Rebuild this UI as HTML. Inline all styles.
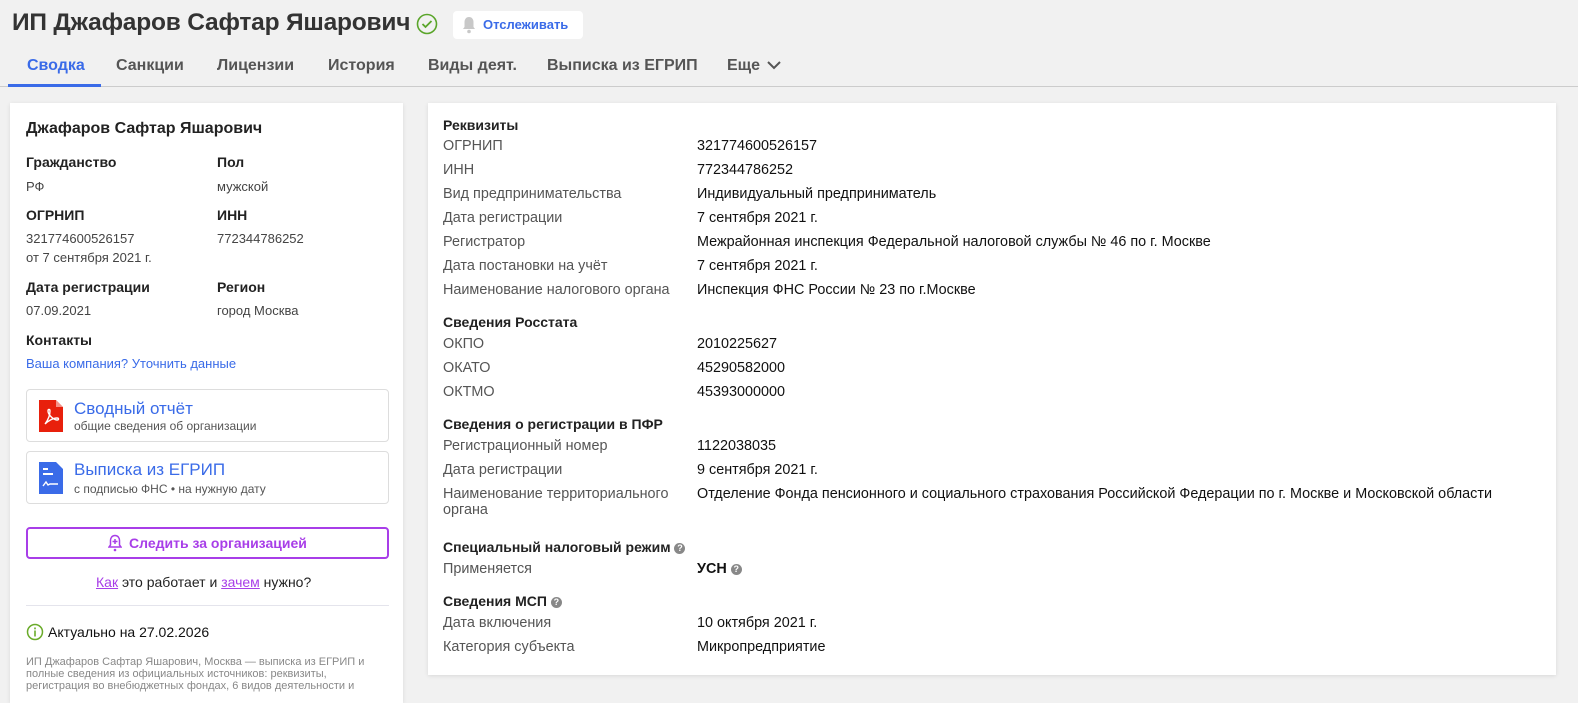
<!DOCTYPE html>
<html><head><meta charset="utf-8"><style>
*{box-sizing:border-box;margin:0;padding:0}
body{width:1578px;height:691px;overflow:hidden;background:#f1f1f1;font-family:"Liberation Sans",sans-serif;color:#222;position:relative}
.a{position:absolute;white-space:nowrap}
h1{position:absolute;left:12px;top:9px;font-size:24.5px;font-weight:bold;color:#333;letter-spacing:-0.2px}
.tab{position:absolute;top:57px;font-size:16px;font-weight:bold;color:#555}
.card{position:absolute;background:#fff;box-shadow:0 1px 4px rgba(0,0,0,.1)}
.l{font-size:14.4px;color:#555}
.v{font-size:14.4px;color:#111}
.b{font-size:14px;font-weight:bold;color:#222}
.sm{font-size:13px;color:#444}
</style></head><body>
<h1>ИП Джафаров Сафтар Яшарович</h1>
<svg class="a" style="left:416px;top:13px" width="22" height="22"><circle cx="11" cy="11" r="9.5" fill="none" stroke="#5aa52a" stroke-width="1.6"/><path d="M6.5 11l3 3 6-6" fill="none" stroke="#5aa52a" stroke-width="1.8"/></svg>
<div class="a" style="left:453px;top:11px;width:130px;height:28px;background:#fff;border-radius:4px"></div>
<svg class="a" style="left:462px;top:16px" width="14" height="18"><path d="M7 1c-3 0-4.5 2.5-4.5 5v5L1 13h12l-1.5-2V6C11.5 3.5 10 1 7 1z" fill="#c8c8c8"/><circle cx="7" cy="15.5" r="1.8" fill="#c8c8c8"/></svg>
<div class="a" style="left:483px;top:17px;font-size:13px;font-weight:bold;color:#3a6be8">Отслеживать</div>
<div class="tab" style="left:27px;color:#3a6be8">Сводка</div>
<div class="tab" style="left:116px">Санкции</div>
<div class="tab" style="left:217px">Лицензии</div>
<div class="tab" style="left:328px">История</div>
<div class="tab" style="left:428px">Виды деят.</div>
<div class="tab" style="left:547px">Выписка из ЕГРИП</div>
<div class="tab" style="left:727px">Еще</div>
<svg class="a" style="left:766px;top:59px" width="16" height="12"><path d="M2 3l6 6 6-6" fill="none" stroke="#555" stroke-width="2"/></svg>
<div class="a" style="left:0;top:86px;width:1578px;height:1px;background:#ccc"></div>
<div class="a" style="left:8px;top:84px;width:93px;height:3px;background:#3a6be8"></div>

<div class="card" style="left:10px;top:103px;width:393px;height:600px">
<div class="a b" style="left:16px;top:17px;font-size:16px">Джафаров Сафтар Яшарович</div>
<div class="a b" style="left:16px;top:51px">Гражданство</div><div class="a b" style="left:207px;top:51px">Пол</div>
<div class="a sm" style="left:16px;top:76px">РФ</div><div class="a sm" style="left:207px;top:76px">мужской</div>
<div class="a b" style="left:16px;top:104px">ОГРНИП</div><div class="a b" style="left:207px;top:104px">ИНН</div>
<div class="a sm" style="left:16px;top:128px">321774600526157</div><div class="a sm" style="left:207px;top:128px">772344786252</div>
<div class="a sm" style="left:16px;top:147px">от 7 сентября 2021 г.</div>
<div class="a b" style="left:16px;top:176px">Дата регистрации</div><div class="a b" style="left:207px;top:176px">Регион</div>
<div class="a sm" style="left:16px;top:200px">07.09.2021</div><div class="a sm" style="left:207px;top:200px">город Москва</div>
<div class="a b" style="left:16px;top:229px">Контакты</div>
<div class="a" style="left:16px;top:253px;font-size:13px;color:#3a6be8">Ваша компания? Уточнить данные</div>
<div class="a" style="left:16px;top:286px;width:363px;height:53px;border:1px solid #ddd;border-radius:4px"></div>
<svg class="a" style="left:29px;top:297px" width="24" height="32"><path d="M0 0h17l7 7v25H0z" fill="#e8200c"/><path d="M17 0v7h7" fill="#fff" opacity=".5"/><path d="M6 24c3-4 5-9 5-13 0-2-2-2-2 0 0 4 6 9 9 9 2 0 2-2 0-2-4 0-9 3-12 6" fill="none" stroke="#fff" stroke-width="1.4"/></svg>
<div class="a" style="left:64px;top:296px;font-size:17px;color:#3a6be8">Сводный отчёт</div>
<div class="a" style="left:64px;top:316px;font-size:12px;color:#555">общие сведения об организации</div>
<div class="a" style="left:16px;top:348px;width:363px;height:53px;border:1px solid #ddd;border-radius:4px"></div>
<svg class="a" style="left:29px;top:359px" width="24" height="32"><path d="M0 0h17l7 7v25H0z" fill="#3a6be8"/><rect x="4" y="6" width="5" height="2" fill="#fff"/><rect x="4" y="11" width="10" height="2" fill="#fff"/><path d="M4 24l3-4 2 3 2-1h8" fill="none" stroke="#fff" stroke-width="1.4"/></svg>
<div class="a" style="left:64px;top:357px;font-size:17px;color:#3a6be8">Выписка из ЕГРИП</div>
<div class="a" style="left:64px;top:379px;font-size:12px;color:#555">с подписью ФНС • на нужную дату</div>
<div class="a" style="left:16px;top:424px;width:363px;height:32px;border:2px solid #a83ee8;border-radius:4px"></div>
<svg class="a" style="left:98px;top:431px" width="14" height="18"><path d="M7 1.5c-3 0-4.5 2.5-4.5 5v4.5L1 13h12l-1.5-2V6.5C11.5 4 10 1.5 7 1.5z" fill="none" stroke="#a83ee8" stroke-width="1.5"/><path d="M7 5v5M4.5 7.5h5" stroke="#a83ee8" stroke-width="1.5"/><circle cx="7" cy="16" r="1.3" fill="#a83ee8"/></svg>
<div class="a" style="left:119px;top:432px;font-size:14px;font-weight:bold;color:#a83ee8">Следить за организацией</div>
<div class="a" style="left:86px;top:471px;font-size:14px;color:#222"><u style="color:#a83ee8">Как</u> это работает и <u style="color:#a83ee8">зачем</u> нужно?</div>
<div class="a" style="left:16px;top:502px;width:363px;height:1px;background:#e4e4ec"></div>
<svg class="a" style="left:16px;top:520px" width="18" height="18"><circle cx="9" cy="9" r="7.5" fill="none" stroke="#6aab2a" stroke-width="1.5"/><rect x="8.2" y="7.5" width="1.6" height="6" fill="#6aab2a"/><rect x="8.2" y="4.5" width="1.6" height="1.8" fill="#6aab2a"/></svg>
<div class="a" style="left:38px;top:521px;font-size:14px;color:#111">Актуально на 27.02.2026</div>
<div class="a" style="left:16px;top:553px;font-size:11px;color:#888;line-height:12px;white-space:normal;width:350px">ИП Джафаров Сафтар Яшарович, Москва — выписка из ЕГРИП и полные сведения из официальных источников: реквизиты, регистрация во внебюджетных фондах, 6 видов деятельности и</div>
</div>

<div class="card" style="left:428px;top:103px;width:1128px;height:572px">
<div class="a b" style="left:15px;top:14px">Реквизиты</div>
<div class="a l" style="left:15px;top:35px">ОГРНИП</div><div class="a v" style="left:269px;top:35px">321774600526157</div>
<div class="a l" style="left:15px;top:59px">ИНН</div><div class="a v" style="left:269px;top:59px">772344786252</div>
<div class="a l" style="left:15px;top:83px">Вид предпринимательства</div><div class="a v" style="left:269px;top:83px">Индивидуальный предприниматель</div>
<div class="a l" style="left:15px;top:107px">Дата регистрации</div><div class="a v" style="left:269px;top:107px">7 сентября 2021 г.</div>
<div class="a l" style="left:15px;top:131px">Регистратор</div><div class="a v" style="left:269px;top:131px">Межрайонная инспекция Федеральной налоговой службы № 46 по г. Москве</div>
<div class="a l" style="left:15px;top:155px">Дата постановки на учёт</div><div class="a v" style="left:269px;top:155px">7 сентября 2021 г.</div>
<div class="a l" style="left:15px;top:179px">Наименование налогового органа</div><div class="a v" style="left:269px;top:179px">Инспекция ФНС России № 23 по г.Москве</div>
<div class="a b" style="left:15px;top:211px">Сведения Росстата</div>
<div class="a l" style="left:15px;top:233px">ОКПО</div><div class="a v" style="left:269px;top:233px">2010225627</div>
<div class="a l" style="left:15px;top:257px">ОКАТО</div><div class="a v" style="left:269px;top:257px">45290582000</div>
<div class="a l" style="left:15px;top:281px">ОКТМО</div><div class="a v" style="left:269px;top:281px">45393000000</div>
<div class="a b" style="left:15px;top:313px">Сведения о регистрации в ПФР</div>
<div class="a l" style="left:15px;top:335px">Регистрационный номер</div><div class="a v" style="left:269px;top:335px">1122038035</div>
<div class="a l" style="left:15px;top:359px">Дата регистрации</div><div class="a v" style="left:269px;top:359px">9 сентября 2021 г.</div>
<div class="a l" style="left:15px;top:383px;line-height:16px">Наименование территориального<br>органа</div><div class="a v" style="left:269px;top:383px">Отделение Фонда пенсионного и социального страхования Российской Федерации по г. Москве и Московской области</div>
<div class="a b" style="left:15px;top:436px">Специальный налоговый режим <span style="display:inline-block;width:11px;height:11px;border-radius:50%;background:#888;color:#fff;font-size:9px;text-align:center;line-height:11px;vertical-align:1px">?</span></div>
<div class="a l" style="left:15px;top:458px">Применяется</div><div class="a v" style="left:269px;top:458px;font-weight:bold">УСН <span style="display:inline-block;width:11px;height:11px;border-radius:50%;background:#888;color:#fff;font-size:9px;text-align:center;line-height:11px;vertical-align:1px">?</span></div>
<div class="a b" style="left:15px;top:490px">Сведения МСП <span style="display:inline-block;width:11px;height:11px;border-radius:50%;background:#888;color:#fff;font-size:9px;text-align:center;line-height:11px;vertical-align:1px">?</span></div>
<div class="a l" style="left:15px;top:512px">Дата включения</div><div class="a v" style="left:269px;top:512px">10 октября 2021 г.</div>
<div class="a l" style="left:15px;top:536px">Категория субъекта</div><div class="a v" style="left:269px;top:536px">Микропредприятие</div>
</div>
</body></html>
